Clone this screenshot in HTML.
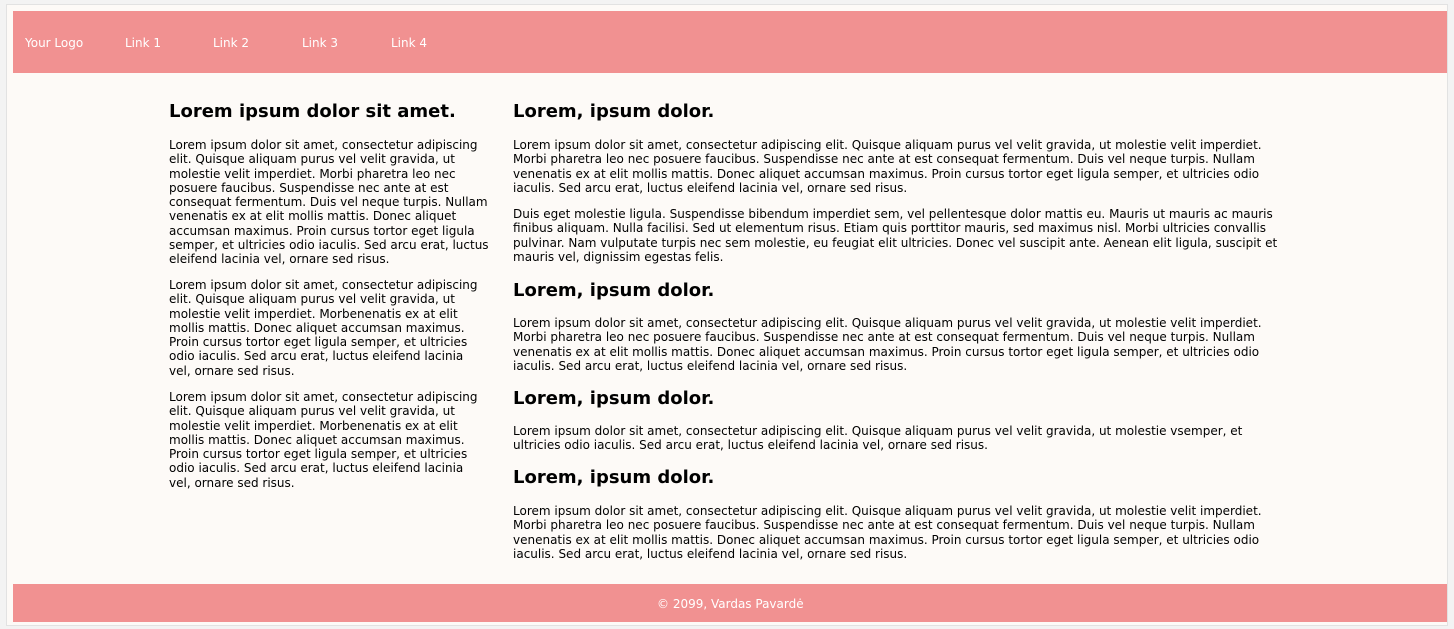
<!DOCTYPE html>
<html><head><meta charset="utf-8"><style>
html,body{margin:0;padding:0;}
body{width:1454px;height:629px;background:#f3f3f3;position:relative;overflow:hidden;font-family:"DejaVu Sans","Liberation Sans",sans-serif;color:#000;}
.frame{position:absolute;left:6px;top:4px;width:1442px;height:622px;background:#fdfaf7;border:1px solid #e2e2e2;box-sizing:border-box;}
.hdr{position:absolute;left:13px;top:11px;width:1434px;height:62px;background:#f19191;}
.hdr span{position:absolute;top:25px;font-size:12px;line-height:14px;color:#fff;}
.ftr{position:absolute;left:13px;top:584px;width:1434px;height:38px;background:#f19191;}
.ftr span{position:absolute;left:644px;top:13px;font-size:12px;line-height:14px;color:#fff;}
.b{position:absolute;font-size:12px;line-height:14.3px;white-space:nowrap;}
.h{position:absolute;font-size:18px;font-weight:bold;line-height:22px;white-space:nowrap;}
</style></head><body>
<div class="frame"></div>
<div class="hdr"><span style="left:12px">Your Logo</span><span style="left:112px">Link 1</span><span style="left:200px">Link 2</span><span style="left:289px">Link 3</span><span style="left:378px">Link 4</span></div>

<div class="h" style="left:169px;top:101px">Lorem ipsum dolor sit amet.</div>
<div class="b" style="left:169px;top:138px">Lorem ipsum dolor sit amet, consectetur adipiscing<br>elit. Quisque aliquam purus vel velit gravida, ut<br>molestie velit imperdiet. Morbi pharetra leo nec<br>posuere faucibus. Suspendisse nec ante at est<br>consequat fermentum. Duis vel neque turpis. Nullam<br>venenatis ex at elit mollis mattis. Donec aliquet<br>accumsan maximus. Proin cursus tortor eget ligula<br>semper, et ultricies odio iaculis. Sed arcu erat, luctus<br>eleifend lacinia vel, ornare sed risus.</div>
<div class="b" style="left:169px;top:278px">Lorem ipsum dolor sit amet, consectetur adipiscing<br>elit. Quisque aliquam purus vel velit gravida, ut<br>molestie velit imperdiet. Morbenenatis ex at elit<br>mollis mattis. Donec aliquet accumsan maximus.<br>Proin cursus tortor eget ligula semper, et ultricies<br>odio iaculis. Sed arcu erat, luctus eleifend lacinia<br>vel, ornare sed risus.</div>
<div class="b" style="left:169px;top:390px">Lorem ipsum dolor sit amet, consectetur adipiscing<br>elit. Quisque aliquam purus vel velit gravida, ut<br>molestie velit imperdiet. Morbenenatis ex at elit<br>mollis mattis. Donec aliquet accumsan maximus.<br>Proin cursus tortor eget ligula semper, et ultricies<br>odio iaculis. Sed arcu erat, luctus eleifend lacinia<br>vel, ornare sed risus.</div>

<div class="h" style="left:513px;top:101px">Lorem, ipsum dolor.</div>
<div class="b" style="left:513px;top:138px">Lorem ipsum dolor sit amet, consectetur adipiscing elit. Quisque aliquam purus vel velit gravida, ut molestie velit imperdiet.<br>Morbi pharetra leo nec posuere faucibus. Suspendisse nec ante at est consequat fermentum. Duis vel neque turpis. Nullam<br>venenatis ex at elit mollis mattis. Donec aliquet accumsan maximus. Proin cursus tortor eget ligula semper, et ultricies odio<br>iaculis. Sed arcu erat, luctus eleifend lacinia vel, ornare sed risus.</div>
<div class="b" style="left:513px;top:207px">Duis eget molestie ligula. Suspendisse bibendum imperdiet sem, vel pellentesque dolor mattis eu. Mauris ut mauris ac mauris<br>finibus aliquam. Nulla facilisi. Sed ut elementum risus. Etiam quis porttitor mauris, sed maximus nisl. Morbi ultricies convallis<br>pulvinar. Nam vulputate turpis nec sem molestie, eu feugiat elit ultricies. Donec vel suscipit ante. Aenean elit ligula, suscipit et<br>mauris vel, dignissim egestas felis.</div>
<div class="h" style="left:513px;top:280px">Lorem, ipsum dolor.</div>
<div class="b" style="left:513px;top:316px">Lorem ipsum dolor sit amet, consectetur adipiscing elit. Quisque aliquam purus vel velit gravida, ut molestie velit imperdiet.<br>Morbi pharetra leo nec posuere faucibus. Suspendisse nec ante at est consequat fermentum. Duis vel neque turpis. Nullam<br>venenatis ex at elit mollis mattis. Donec aliquet accumsan maximus. Proin cursus tortor eget ligula semper, et ultricies odio<br>iaculis. Sed arcu erat, luctus eleifend lacinia vel, ornare sed risus.</div>
<div class="h" style="left:513px;top:388px">Lorem, ipsum dolor.</div>
<div class="b" style="left:513px;top:424px">Lorem ipsum dolor sit amet, consectetur adipiscing elit. Quisque aliquam purus vel velit gravida, ut molestie vsemper, et<br>ultricies odio iaculis. Sed arcu erat, luctus eleifend lacinia vel, ornare sed risus.</div>
<div class="h" style="left:513px;top:467px">Lorem, ipsum dolor.</div>
<div class="b" style="left:513px;top:504px">Lorem ipsum dolor sit amet, consectetur adipiscing elit. Quisque aliquam purus vel velit gravida, ut molestie velit imperdiet.<br>Morbi pharetra leo nec posuere faucibus. Suspendisse nec ante at est consequat fermentum. Duis vel neque turpis. Nullam<br>venenatis ex at elit mollis mattis. Donec aliquet accumsan maximus. Proin cursus tortor eget ligula semper, et ultricies odio<br>iaculis. Sed arcu erat, luctus eleifend lacinia vel, ornare sed risus.</div>

<div class="ftr"><span>© 2099, Vardas Pavardė</span></div>
</body></html>
